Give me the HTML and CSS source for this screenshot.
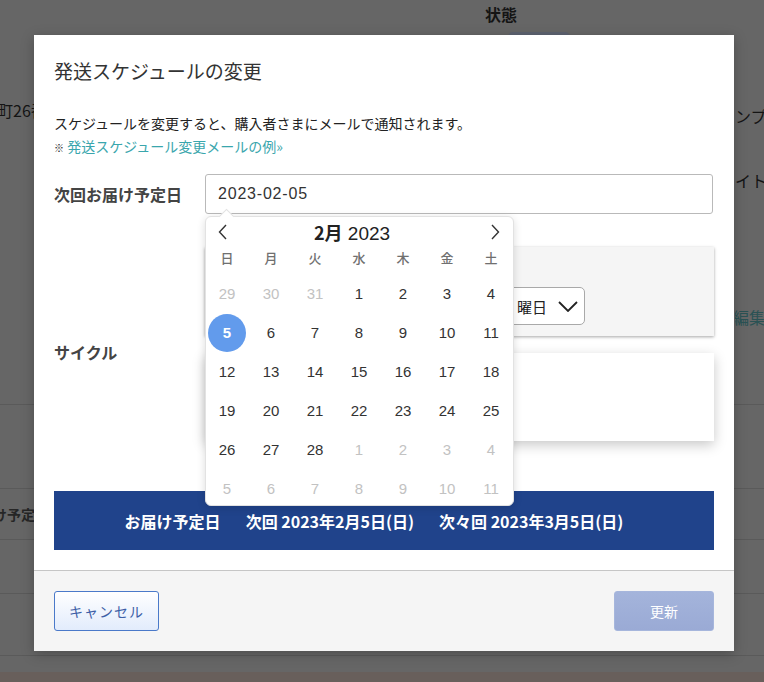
FILE: index.html
```html
<!DOCTYPE html>
<html lang="ja">
<head>
    <meta charset="UTF-8">
    <meta name="viewport" content="width=device-width, initial-scale=1.0">
    <title>発送スケジュールの変更</title>
    <link rel="stylesheet" href="styles.css">
</head>
<body>
    <div class="page">
        <div class="page-head">
            <span class="page-title">状態</span>
            <span class="page-badge"></span>
        </div>
        <div class="page-info">
            <div class="info-left">町26番地</div>
            <div class="info-right">
                <div class="info-line first">ンプー</div>
                <div class="info-line second">イト</div>
                <div class="info-line edit">編集）</div>
            </div>
        </div>
        <div class="page-table">
            <div class="table-row r1"></div>
            <div class="table-row r2"><span class="row-label">お届け予定日</span></div>
            <div class="table-row r3"></div>
            <div class="table-row r4"></div>
            <div class="table-row r5"></div>
        </div>
    </div>

    <div class="modal">
        <div class="modal-body">
            <h2 class="modal-title">発送スケジュールの変更</h2>
            <p class="modal-desc">スケジュールを変更すると、購入者さまにメールで通知されます。</p>
            <p class="modal-note"><span class="note-mark">※</span> <a class="note-link" href="#">発送スケジュール変更メールの例»</a></p>

            <div class="field">
                <label class="field-label">次回お届け予定日</label>
                <div class="field-control date-control">
                    <div class="date-input">2023-02-05</div>

                    <div class="calendar">
                        <div class="cal-head">
                            <svg class="cal-arrow" width="10" height="16" viewBox="0 0 10 16"><polyline points="8,1 1.5,8 8,15" fill="none" stroke="#333" stroke-width="1.4"/></svg>
                            <div class="cal-month"><b>2月</b> 2023</div>
                            <svg class="cal-arrow" width="10" height="16" viewBox="0 0 10 16"><polyline points="2,1 8.5,8 2,15" fill="none" stroke="#333" stroke-width="1.4"/></svg>
                        </div>
                        <div class="cal-weekdays">
                            <span>日</span><span>月</span><span>火</span><span>水</span><span>木</span><span>金</span><span>土</span>
                        </div>
                        <div class="cal-days">
                            <span class="muted">29</span><span class="muted">30</span><span class="muted">31</span><span>1</span><span>2</span><span>3</span><span>4</span>
                            <span><i class="selected">5</i></span><span>6</span><span>7</span><span>8</span><span>9</span><span>10</span><span>11</span>
                            <span>12</span><span>13</span><span>14</span><span>15</span><span>16</span><span>17</span><span>18</span>
                            <span>19</span><span>20</span><span>21</span><span>22</span><span>23</span><span>24</span><span>25</span>
                            <span>26</span><span>27</span><span>28</span><span class="muted">1</span><span class="muted">2</span><span class="muted">3</span><span class="muted">4</span>
                            <span class="muted">5</span><span class="muted">6</span><span class="muted">7</span><span class="muted">8</span><span class="muted">9</span><span class="muted">10</span><span class="muted">11</span>
                        </div>
                    </div>
                </div>
            </div>

            <div class="field field-cycle">
                <label class="field-label cycle-label">サイクル</label>
                <div class="field-control">
                    <div class="cycle-box">
                        <div class="cycle-caption"></div>
                        <div class="cycle-selects">
                            <div class="select s-month"></div>
                            <div class="select s-week"></div>
                            <div class="select s-day">
                                <span>曜日</span>
                                <svg width="20" height="11" viewBox="0 0 20 11"><polyline points="1,1 10,10 19,1" fill="none" stroke="#222" stroke-width="1.8"/></svg>
                            </div>
                        </div>
                    </div>
                    <div class="cycle-preview"></div>
                </div>
            </div>

            <div class="delivery-banner">
                <span>お届け予定日</span>
                <span>次回 2023年2月5日(日)</span>
                <span>次々回 2023年3月5日(日)</span>
            </div>
        </div>

        <div class="modal-footer">
            <button class="btn btn-cancel">キャンセル</button>
            <button class="btn btn-primary" disabled>更新</button>
        </div>
    </div>
</body>
</html>
```

FILE: styles.css
```css
* {
    box-sizing: border-box;
}

body {
    margin: 0;
    width: 764px;
    height: 682px;
    overflow: hidden;
    position: relative;
    background: #666;
    font-family: "Liberation Sans", "Noto Sans CJK JP", sans-serif;
    color: #333;
}

/* page behind the overlay */

.page {
    height: 682px;
    display: flex;
    flex-direction: column;
    color: #141414;
}

.page-head {
    height: 35px;
    display: flex;
    align-items: flex-start;
    padding-left: 485px;
    position: relative;
}

.page-title {
    font-family: "Noto Sans CJK JP", sans-serif;
    font-size: 16px;
    font-weight: bold;
    line-height: 28px;
}

.page-badge {
    position: absolute;
    left: 508px;
    top: 32px;
    width: 62px;
    height: 20px;
    border-radius: 5px;
    background: #5d6270;
}

.page-info {
    height: 369px;
    display: flex;
    justify-content: space-between;
    font-family: "Noto Sans CJK JP", sans-serif;
    font-size: 16px;
    line-height: 22px;
    white-space: nowrap;
    overflow: hidden;
}

.info-left {
    padding-top: 64px;
    margin-left: -3px;
}

.info-right {
    width: 29px;
    overflow: hidden;
}

.info-line.first {
    margin-top: 70px;
}

.info-line.second {
    margin-top: 42px;
}

.info-line.edit {
    margin-top: 115px;
    margin-left: -2px;
    color: #2a5254;
}

.page-table {
    flex: 1;
    display: flex;
    flex-direction: column;
}

.table-row {
    border-top: 1px solid #5a5a5a;
    display: flex;
    align-items: center;
}

.r1 { height: 84px; }
.r2 { height: 51px; }
.r3 { height: 54px; }
.r4 { height: 62px; }
.r5 { flex: 1; border-bottom: 10px solid #685f5b; }

.row-label {
    margin-left: -35px;
    font-family: "Noto Sans CJK JP", sans-serif;
    font-size: 14px;
    font-weight: bold;
    color: #262626;
}

/* modal */

.modal {
    position: absolute;
    left: 34px;
    top: 35px;
    width: 700px;
    background: #fff;
    box-shadow: 0 3px 12px rgba(0,0,0,0.25);
}

.modal-body {
    padding: 23px 20px 20px;
}

.modal-title {
    margin: 0;
    font-family: "Noto Sans CJK JP", sans-serif;
    font-size: 19px;
    font-weight: normal;
    line-height: 26px;
    color: #333;
}

.modal-desc {
    margin: 28px 0 0;
    font-family: "Noto Sans CJK JP", sans-serif;
    font-size: 14px;
    line-height: 22px;
    color: #222;
}

.modal-note {
    margin: 1px 0 0;
    font-family: "Noto Sans CJK JP", sans-serif;
    font-size: 14px;
    line-height: 22px;
}

.note-mark {
    font-size: 10px;
    color: #222;
}

.note-link {
    color: #3aa6ad;
    text-decoration: none;
}

.field {
    display: flex;
    align-items: center;
    margin-top: 15px;
}

.field-label {
    width: 151px;
    flex-shrink: 0;
    font-family: "Noto Sans CJK JP", sans-serif;
    font-size: 16px;
    font-weight: bold;
    line-height: 22px;
    color: #444;
}

.field-control {
    flex: 1;
}

.date-control {
    position: relative;
    z-index: 2;
}

.date-input {
    height: 40px;
    margin-right: 1px;
    padding: 0 12px;
    border: 1px solid #b9b9b9;
    border-radius: 3px;
    display: flex;
    align-items: center;
    font-size: 16px;
    letter-spacing: 0.8px;
    color: #333;
}

/* date picker */

.calendar {
    position: absolute;
    top: 42px;
    left: 0;
    width: 309px;
    height: 290px;
    background: #fff;
    border: 1px solid #e2e2e2;
    border-radius: 6px;
    box-shadow: 0 2px 8px rgba(0,0,0,0.14);
    padding-top: 1px;
}

.calendar::before {
    content: "";
    position: absolute;
    left: 15px;
    top: -6px;
    width: 10px;
    height: 10px;
    background: #fff;
    border-left: 1px solid #e2e2e2;
    border-top: 1px solid #e2e2e2;
    transform: rotate(45deg);
}

.cal-head {
    height: 28px;
    display: flex;
    align-items: center;
    justify-content: space-between;
    padding: 0 13px 0 12px;
}

.cal-month {
    font-size: 19px;
    color: #222;
    margin-right: 14px;
}

.cal-month b {
    font-family: "Noto Sans CJK JP", sans-serif;
    font-size: 18px;
}

.cal-weekdays,
.cal-days {
    display: grid;
    grid-template-columns: repeat(7, 44px);
    margin-left: -1px;
}

.cal-weekdays {
    height: 20px;
    margin-top: 1px;
    margin-bottom: 7px;
    align-items: center;
}

.cal-weekdays span {
    text-align: center;
    font-family: "Noto Sans CJK JP", sans-serif;
    font-size: 13px;
    font-weight: 500;
    color: #707070;
}

.cal-days span {
    height: 39px;
    display: flex;
    align-items: center;
    justify-content: center;
    font-size: 15px;
    color: #333;
}

.cal-days span.muted {
    color: #c2c2c2;
}

.cal-days .selected {
    width: 38px;
    height: 38px;
    border-radius: 50%;
    background: #629bec;
    color: #fff;
    font-style: normal;
    font-weight: bold;
    display: flex;
    align-items: center;
    justify-content: center;
}

/* cycle */

.field-cycle {
    margin-top: 33px;
    align-items: flex-start;
}

.cycle-label {
    margin-top: 94px;
}

.cycle-box {
    height: 89px;
    padding: 12px 16px 11px;
    background: #f5f5f5;
    box-shadow: 0 1px 3px rgba(0,0,0,0.35);
}

.cycle-caption {
    height: 20px;
    margin-bottom: 8px;
}

.cycle-selects {
    display: flex;
    gap: 10px;
}

.select {
    height: 38px;
    padding: 0 12px;
    display: flex;
    align-items: center;
    justify-content: space-between;
    background: #fff;
    border: 1px solid #a9a9a9;
    border-radius: 5px;
    font-family: "Noto Sans CJK JP", sans-serif;
    font-size: 15px;
    color: #222;
}

.s-month { width: 120px; }
.s-week { width: 129px; }
.s-day { width: 95px; padding: 0 6px 0 26px; }

.cycle-preview {
    height: 88px;
    margin-top: 17px;
    background: #fff;
    box-shadow: 0 4px 12px rgba(0,0,0,0.22);
}

.delivery-banner {
    height: 59px;
    margin-top: 50px;
    padding-right: 20px;
    display: flex;
    align-items: center;
    justify-content: center;
    gap: 25px;
    background: #20438b;
    color: #fff;
    font-family: "Noto Sans CJK JP", sans-serif;
    font-size: 16px;
    font-weight: bold;
}

/* footer */

.modal-footer {
    display: flex;
    justify-content: space-between;
    padding: 20px;
    background: #f5f5f5;
    border-top: 1px solid #c6c6c6;
}

.btn {
    height: 40px;
    border-radius: 3px;
    font-family: "Noto Sans CJK JP", sans-serif;
    font-size: 14px;
    cursor: pointer;
}

.btn-cancel {
    width: 105px;
    border: 1px solid #4a79c9;
    background: linear-gradient(#ffffff, #e2ecfc);
    color: #3d5fa7;
    letter-spacing: 1px;
}

.btn-primary {
    width: 100px;
    border: 1px solid #a6b6dc;
    background: linear-gradient(#a4b4db, #9aaad5);
    color: #fff;
}
```
